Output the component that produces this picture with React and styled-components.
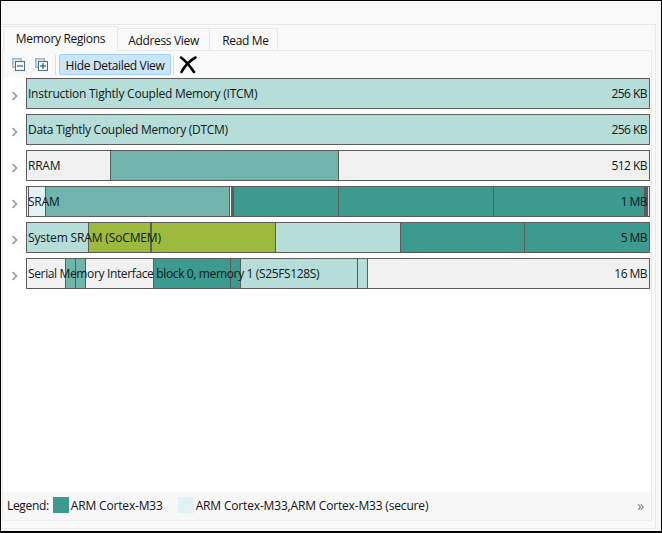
import React from "react";
import styled, { createGlobalStyle } from "styled-components";

const Global = createGlobalStyle`
  html, body { margin: 0; padding: 0; background: #fff; }
  #root { width: 662px; height: 533px; }
  * { box-sizing: border-box; }
`;

const Frame = styled.div`
  width: 662px;
  height: 533px;
  border: 1px solid #000;
  border-bottom-width: 2px;
  background: #f9f9f9;
  padding: 23px 5px 2px 0;
  display: flex;
  font-family: "Open Sans", "Noto Sans", sans-serif;
  font-size: 12px;
  color: #111;
`;
const Panel = styled.div`
  flex: 1;
  border: 1px solid #e8e8e8;
  border-left: none;
  display: flex;
  flex-direction: column;
  padding: 1px 3px 7px 1px;
`;
const TabBar = styled.div`
  display: flex;
  align-items: flex-end;
  height: 25px;
  flex: none;
  position: relative;
  z-index: 1;
  margin: 0 0 -1px 1px;
`;
const Tab = styled.div`
  height: ${(p) => (p.$active ? 25 : 23)}px;
  width: ${(p) => p.$w}px;
  display: flex;
  align-items: center;
  justify-content: center;
  letter-spacing: -0.33px;
  line-height: 17px;
  background: #f9f9f9;
  border: 1px solid #e8e8e8;
  border-left-width: ${(p) => (p.$active ? 1 : 0)}px;
  border-bottom-color: ${(p) => (p.$active ? "#f9f9f9" : "#e8e8e8")};
  padding-top: ${(p) => (p.$active ? 0 : 1)}px;
  padding-left: ${(p) => p.$pl || 0}px;
`;
const Body = styled.div`
  flex: 1;
  display: flex;
  flex-direction: column;
  border: 1px solid #e8e8e8;
  border-bottom-color: #eeeeee;
  min-height: 0;
`;
const Toolbar = styled.div`
  height: 27px;
  flex: none;
  display: flex;
  align-items: center;
  padding-left: 9px;
  background: #f9f9f9;
`;
const ToolIcon = styled.svg`
  width: 13px;
  height: 13px;
  flex: none;
  margin-right: ${(p) => p.$mr}px;
  display: block;
`;
const Sep = styled.div`
  width: 1px;
  height: 20px;
  background: #dcdcdc;
  flex: none;
  margin: 0 ${(p) => p.$r}px 0 ${(p) => p.$l}px;
`;
const ToolButton = styled.button`
  width: 112px;
  height: 21px;
  flex: none;
  padding: 1px 0 0;
  border: 1px solid #99d1ff;
  border-radius: 2px;
  background: #cce4f7;
  font: inherit;
  color: #111;
  letter-spacing: -0.33px;
`;
const List = styled.div`
  flex: 1;
  background: #fff;
  display: flex;
  flex-direction: column;
  gap: 5px;
  padding-right: 1px;
`;
const Row = styled.div`
  display: flex;
  align-items: center;
  height: 31px;
  flex: none;
`;
const Chevron = styled.svg`
  width: 23px;
  height: 31px;
  flex: none;
`;
const Bar = styled.div`
  position: relative;
  flex: 1;
  height: 31px;
  border: 1px solid #5c5c5c;
  display: flex;
  background: #f0f0f0;
  overflow: hidden;
`;
const Seg = styled.div`
  flex: ${(p) => (p.$w ? `0 0 ${p.$w}px` : "1 1 0")};
  background: ${(p) => p.$c};
  border-right: ${(p) => (p.$line ? `${p.$line}px solid #5c5c5c` : "none")};
`;
const BarLabel = styled.span`
  position: absolute;
  left: 1px;
  top: 6px;
  line-height: 17px;
  white-space: nowrap;
  letter-spacing: ${(p) => p.$ls ?? -0.23}px;
  color: #0c1820;
`;
const BarSize = styled(BarLabel)`
  left: auto;
  right: 2px;
  letter-spacing: -0.55px;
`;
const Legend = styled.div`
  height: 28px;
  flex: none;
  background: #f7f7f7;
  display: flex;
  align-items: center;
  padding: 0 7px 2px 4px;
  letter-spacing: -0.17px;
`;
const LegendTitle = styled.span`
  margin-right: 4px;
  letter-spacing: -0.33px;
`;
const Swatch = styled.span`
  width: 16px;
  height: 16px;
  flex: none;
  background: ${(p) => p.$c};
  margin-right: 2px;
`;
const LegendText = styled.span`
  margin-right: ${(p) => p.$mr}px;
`;
const More = styled.span`
  margin-left: auto;
  color: #777;
  font-size: 14px;
`;

const OFF = "#f0f0f0";
const PALE = "#b7ddd8";
const MID = "#6fb5ac";
const DARK = "#3c9a8f";
const ICE = "#e0f2f1";
const OLIVE = "#9dba3f";

const rows = [
  { name: "Instruction Tightly Coupled Memory (ITCM)", size: "256 KB", segs: [{ c: PALE }] },
  { name: "Data Tightly Coupled Memory (DTCM)", size: "256 KB", ls: -0.29, segs: [{ c: PALE }] },
  {
    name: "RRAM",
    size: "512 KB",
    segs: [
      { c: OFF, w: 84, line: 1 },
      { c: MID, w: 228, line: 1 },
      { c: OFF },
    ],
  },
  {
    name: "SRAM",
    size: "1 MB",
    segs: [
      { c: OFF, w: 2, line: 1 },
      { c: ICE, w: 17, line: 1 },
      { c: MID, w: 184, line: 1 },
      { c: "#f4f4f4", w: 4, line: 3 },
      { c: DARK, w: 105, line: 1 },
      { c: DARK, w: 155, line: 1 },
      { c: DARK, w: 154, line: 4 },
      { c: "#dfe7e6" },
    ],
  },
  {
    name: "System SRAM (SoCMEM)",
    size: "5 MB",
    ls: -0.14,
    segs: [
      { c: PALE, w: 62, line: 1 },
      { c: OLIVE, w: 63, line: 2 },
      { c: OLIVE, w: 124, line: 1 },
      { c: PALE, w: 125, line: 1 },
      { c: DARK, w: 124, line: 1 },
      { c: DARK },
    ],
  },
  {
    name: "Serial Memory Interface block 0, memory 1 (S25FS128S)",
    size: "16 MB",
    ls: -0.36,
    segs: [
      { c: OFF, w: 39, line: 1 },
      { c: MID, w: 10, line: 1 },
      { c: MID, w: 10, line: 1 },
      { c: OFF, w: 68, line: 1 },
      { c: DARK, w: 77, line: 1 },
      { c: DARK, w: 10, line: 1 },
      { c: PALE, w: 117, line: 1 },
      { c: PALE, w: 10, line: 1 },
      { c: OFF },
    ],
  },
];

const CollapseIcon = ({ plus, mr }) => (
  <ToolIcon viewBox="0 0 13 13" $mr={mr}>
    <rect x="0.75" y="0.75" width="8.5" height="8.5" fill="#dfe8ef" stroke="#a3b6c6" strokeWidth="1.5" />
    <rect x="3.5" y="3.5" width="9" height="9" fill="#f4f8fb" stroke="#4a6f8e" />
    <path d={plus ? "M5 8H11M8 5V11" : "M5 8H11"} stroke="#123f66" strokeWidth="1" />
  </ToolIcon>
);

export default function App() {
  return (
    <>
      <Global />
      <Frame>
        <Panel>
          <TabBar>
            <Tab $active $w={115}>Memory Regions</Tab>
            <Tab $w={92}>Address View</Tab>
            <Tab $w={68} $pl={4}>Read Me</Tab>
          </TabBar>
          <Body>
            <Toolbar>
              <CollapseIcon mr={10} />
              <CollapseIcon plus mr={0} />
              <Sep $l={7} $r={3} />
              <ToolButton>Hide Detailed View</ToolButton>
              <Sep $l={2} $r={5} />
              <svg width="18" height="18" viewBox="0 0 18 18">
                <path d="M2 1.5C6 4.5 11 10 15 16" stroke="#000" strokeWidth="2.6" fill="none" strokeLinecap="round" />
                <path d="M16.5 1.5C11 4.5 6 9.5 2.5 16" stroke="#000" strokeWidth="2.6" fill="none" strokeLinecap="round" />
              </svg>
            </Toolbar>
            <List>
              {rows.map((r) => (
                <Row key={r.name}>
                  <Chevron viewBox="0 0 23 31">
                    <path d="M9.5 14L13.5 18L9.5 22" fill="none" stroke="#999" strokeWidth="1.7" />
                  </Chevron>
                  <Bar>
                    {r.segs.map((s, i) => (
                      <Seg key={i} $c={s.c} $w={s.w} $line={s.line} />
                    ))}
                    <BarLabel $ls={r.ls}>{r.name}</BarLabel>
                    <BarSize>{r.size}</BarSize>
                  </Bar>
                </Row>
              ))}
            </List>
            <Legend>
              <LegendTitle>Legend:</LegendTitle>
              <Swatch $c={DARK} />
              <LegendText $mr={15}>ARM Cortex-M33</LegendText>
              <Swatch $c={ICE} />
              <LegendText $mr={0}>ARM Cortex-M33,ARM Cortex-M33 (secure)</LegendText>
              <More>»</More>
            </Legend>
          </Body>
        </Panel>
      </Frame>
    </>
  );
}
